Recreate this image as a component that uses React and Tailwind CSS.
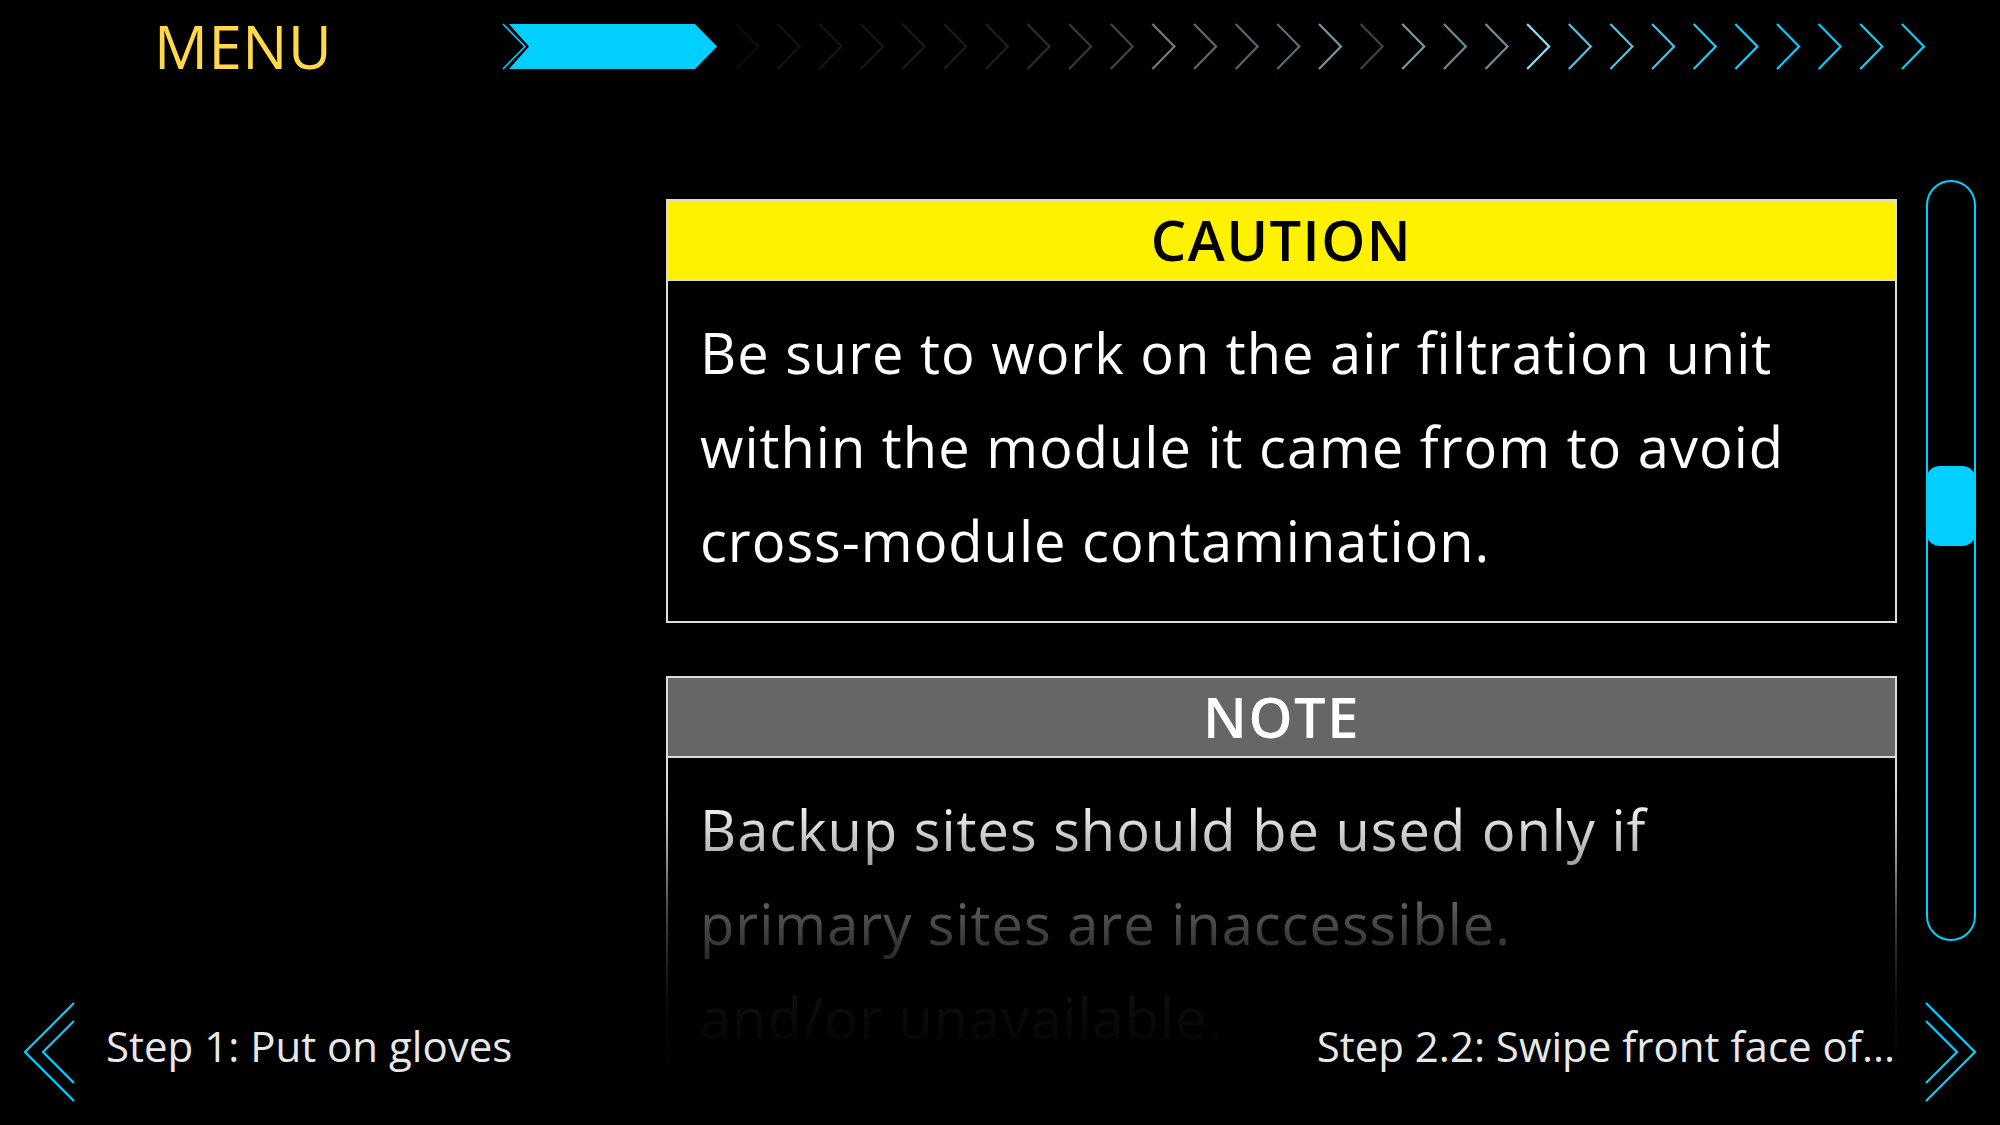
import React from 'react';

const CYAN = '#00cfff';

// colour of each small chevron in the step track, left to right
const chevronColors = [
    '#0c0c0c', '#121212', '#151515', '#171717', '#1a1a1a', '#1c1c1c', '#1f1f1f',
    '#2a2e2f', '#353a3b', '#3f4546', '#6a7f85', '#5a6a6f', '#55666b', '#5a6c72',
    '#7896a0', '#384448', '#7a98a0', '#6a8c95', '#6a909a', '#90e0f5', '#5cc0dd',
    '#4cc4e6', '#3ac8ee', '#20cbf5', '#18cbf5', '#08cdfb', '#00cfff', '#00d4ff', '#00cfff',
];

function StepTrack() {
    return (
        <svg width="1440" height="51" viewBox="0 0 1440 51" fill="none">
            <polyline points="3,3 25,25.5 3,48" stroke={CYAN} strokeWidth="1.6" />
            <polygon points="9,3 195,3 217,25.5 195,48 9,48 29,25.5" fill={CYAN} />
            {chevronColors.map((c, i) => {
                const tip = 258 + i * 41.64;
                return (
                    <polyline
                        key={i}
                        points={`${tip - 22},3 ${tip},25.5 ${tip - 22},48`}
                        stroke={c}
                        strokeWidth="2.2"
                    />
                );
            })}
        </svg>
    );
}

function Panel({ title, headerClass, lines }) {
    return (
        <div className="border-2 border-[#dcdcdc]">
            <div className={`flex h-[80px] items-center justify-center border-b-2 border-[#dcdcdc] pb-[3px] text-[56px] font-semibold tracking-[1.5px] ${headerClass}`}>
                {title}
            </div>
            <div className="px-[32px] pt-[24px] pb-[34px] text-[56px] leading-[94px] tracking-[1px] text-white">
                {lines.map((l, i) => (
                    <div key={i} className="whitespace-nowrap">{l}</div>
                ))}
            </div>
        </div>
    );
}

function NavChevron({ dir }) {
    const pts = dir === 'left'
        ? ['52,3 3,52 52,101', '52,21 21,52 52,83']
        : ['4,3 53,52 4,101', '4,21 35,52 4,83'];
    return (
        <svg width="56" height="104" viewBox="0 0 56 104" fill="none" className="shrink-0">
            {pts.map(p => (
                <polyline key={p} points={p} stroke={CYAN} strokeWidth="2.2" />
            ))}
        </svg>
    );
}

export default function App() {
    return (
        <div className="relative h-[1125px] w-[2000px] overflow-hidden bg-black font-['Open_Sans',sans-serif]">
            {/* top bar */}
            <div className="flex h-[92px] items-center">
                <div className="w-[500px] shrink-0 pl-[154px]">
                    <span className="text-[60px] font-medium leading-none tracking-[0.5px] text-[#ffd94a]">MENU</span>
                </div>
                <StepTrack />
            </div>

            {/* middle */}
            <div className="flex items-start">
                <div className="w-[666px] shrink-0" />
                <div className="mt-[107px] h-[891px] w-[1231px] shrink-0 overflow-hidden [mask-image:linear-gradient(to_bottom,#000_581px,rgba(0,0,0,0.92)_613px,rgba(0,0,0,0.7)_654px,rgba(0,0,0,0.35)_707px,rgba(0,0,0,0.2)_748px,rgba(0,0,0,0.05)_800px,rgba(0,0,0,0.02)_841px,transparent_875px)] [-webkit-mask-image:linear-gradient(to_bottom,#000_581px,rgba(0,0,0,0.92)_613px,rgba(0,0,0,0.7)_654px,rgba(0,0,0,0.35)_707px,rgba(0,0,0,0.2)_748px,rgba(0,0,0,0.05)_800px,rgba(0,0,0,0.02)_841px,transparent_875px)]">
                    <Panel
                        title="CAUTION"
                        headerClass="bg-[#fff200] text-black"
                        lines={[
                            'Be sure to work on the air filtration unit',
                            'within the module it came from to avoid',
                            'cross-module contamination.',
                        ]}
                    />
                    <div className="mt-[53px]">
                        <Panel
                            title="NOTE"
                            headerClass="bg-[#666666] text-white"
                            lines={[
                                'Backup sites should be used only if',
                                'primary sites are inaccessible.',
                                'and/or unavailable.',
                            ]}
                        />
                    </div>
                </div>

                {/* scroll track */}
                <div className="ml-[29px] mt-[88px] h-[761px] w-[50px] shrink-0 rounded-full border-2 border-[#00cfff]">
                    <div className="-mx-[2px] mt-[284px] h-[80px] rounded-[14px] bg-[#00cfff]" />
                </div>
            </div>

            {/* step navigation, over the faded content */}
            <div className="absolute inset-x-0 bottom-0 flex h-[146px] items-center justify-between px-[22px]">
                <div className="flex items-center">
                    <NavChevron dir="left" />
                    <span className="ml-[28px] pb-[12px] text-[42px] leading-none text-[#e8e8e8]">Step 1: Put on gloves</span>
                </div>
                <div className="flex items-center">
                    <span className="mr-[27px] pb-[12px] text-[42px] leading-none text-[#e8e8e8]">Step 2.2: Swipe front face of...</span>
                    <NavChevron dir="right" />
                </div>
            </div>
        </div>
    );
}
